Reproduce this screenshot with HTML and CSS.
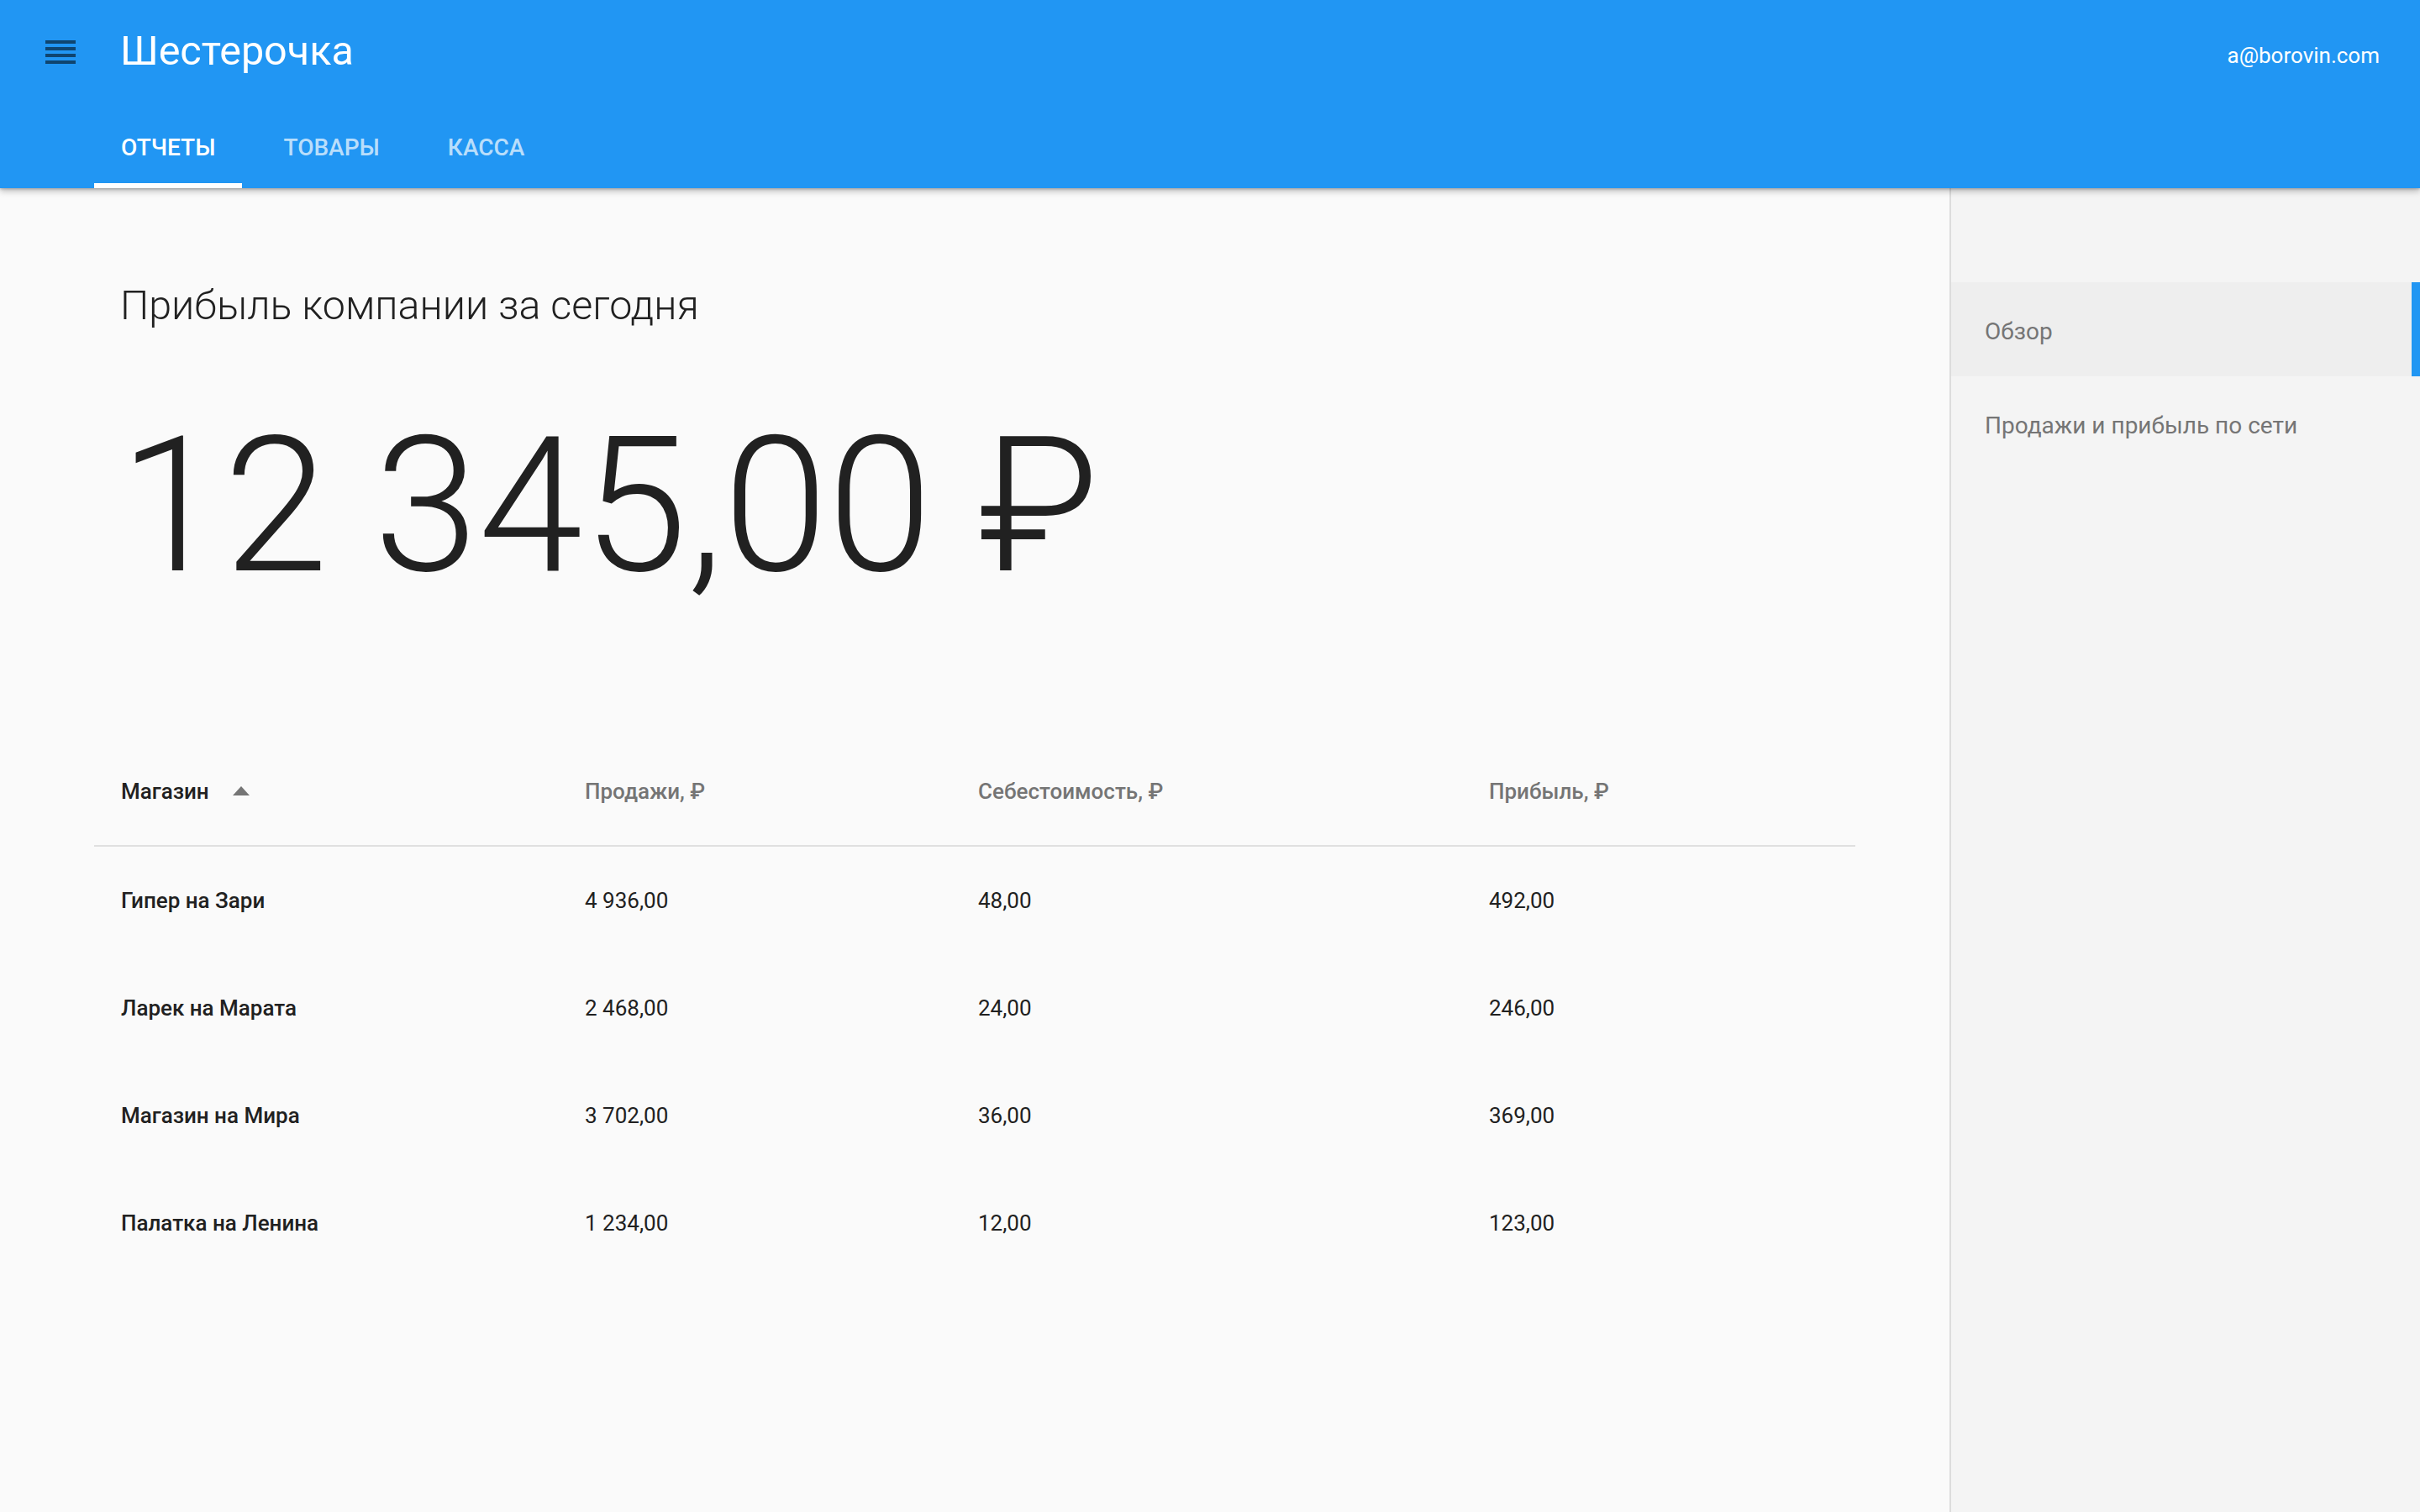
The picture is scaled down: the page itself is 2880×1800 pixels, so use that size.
FILE: index.html
```html
<!DOCTYPE html>
<html lang="ru">
<head>
<meta charset="utf-8">
<title>Шестерочка</title>
<link rel="stylesheet" href="styles.css">
</head>
<body>
<header class="appbar">
  <div class="toolbar">
    <svg class="menu-icon" viewBox="0 0 24 24" width="48" height="48"><path d="M3 15h18v-2H3v2zm0 4h18v-2H3v2zm0-8h18V9H3v2zm0-6v2h18V5H3z"/></svg>
    <div class="app-title">Шестерочка</div>
    <div class="spacer"></div>
    <div class="user">a@borovin.com</div>
  </div>
  <nav class="tabs">
    <div class="tab active">Отчеты</div>
    <div class="tab">Товары</div>
    <div class="tab">Касса</div>
  </nav>
</header>
<div class="layout">
  <main class="content">
    <h1 class="headline">Прибыль компании за сегодня</h1>
    <div class="total">12 345,00 ₽</div>
    <div class="table">
      <div class="row head">
        <div class="cell sorted">Магазин <svg class="sort" viewBox="0 0 20 11" width="20" height="11"><path d="M0 11L10 0l10 11z"/></svg></div>
        <div class="cell">Продажи, ₽</div>
        <div class="cell">Себестоимость, ₽</div>
        <div class="cell">Прибыль, ₽</div>
      </div>
      <div class="row">
        <div class="cell name">Гипер на Зари</div>
        <div class="cell">4 936,00</div>
        <div class="cell">48,00</div>
        <div class="cell">492,00</div>
      </div>
      <div class="row">
        <div class="cell name">Ларек на Марата</div>
        <div class="cell">2 468,00</div>
        <div class="cell">24,00</div>
        <div class="cell">246,00</div>
      </div>
      <div class="row">
        <div class="cell name">Магазин на Мира</div>
        <div class="cell">3 702,00</div>
        <div class="cell">36,00</div>
        <div class="cell">369,00</div>
      </div>
      <div class="row">
        <div class="cell name">Палатка на Ленина</div>
        <div class="cell">1 234,00</div>
        <div class="cell">12,00</div>
        <div class="cell">123,00</div>
      </div>
    </div>
  </main>
  <aside class="sidebar">
    <div class="nav-item active">Обзор</div>
    <div class="nav-item">Продажи и прибыль по сети</div>
  </aside>
</div>
</body>
</html>
```
FILE: styles.css
```css
* { box-sizing: border-box; }
html, body { margin: 0; padding: 0; }
body {
  font-family: Roboto, "Noto Sans", sans-serif;
  color: #212121;
  background: #fafafa;
  min-height: 100vh;
  display: flex;
  flex-direction: column;
}
.appbar {
  background: #2196f3;
  color: #fff;
  height: 224px;
  position: relative;
  z-index: 2;
  box-shadow: 0 3px 8px rgba(0,0,0,0.28), 0 1px 3px rgba(0,0,0,0.2);
}
.toolbar {
  height: 128px;
  display: flex;
  align-items: center;
  padding: 0 48px;
}
.menu-icon {
  fill: rgba(0,0,0,0.54);
  margin-bottom: 4px;
  margin-right: 47px;
  flex: none;
}
.app-title {
  font-size: 48.5px;
  font-weight: 400;
  margin-bottom: 7px;
}
.spacer { flex: 1; }
.user {
  font-size: 26px;
  font-weight: 400;
  margin-top: 3px;
}
.tabs {
  height: 96px;
  display: flex;
  padding-left: 112px;
  gap: 16px;
}
.tab {
  display: flex;
  align-items: center;
  padding: 6px 32px 2px;
  font-size: 28px;
  font-weight: 500;
  text-transform: uppercase;
  color: rgba(255,255,255,0.7);
  border-bottom: 6px solid transparent;
}
.tab + .tab { padding-left: 33px; }
.tab.active {
  color: #fff;
  border-bottom-color: #fff;
}
.layout {
  flex: 1;
  display: flex;
}
.content {
  flex: 1;
  background: #fafafa;
  padding: 108px 112px 0 112px;
}
.headline {
  margin: 0;
  padding-left: 31px;
  font-size: 48.4px;
  line-height: 64px;
  font-weight: 300;
  color: #212121;
}
.total {
  margin-top: 95px;
  padding-left: 30px;
  font-size: 224px;
  line-height: 224px;
  font-weight: 300;
  color: #212121;
}
.table {
  margin-top: 163px;
}
.row {
  display: grid;
  grid-template-columns: 550px 468px 608px 1fr;
  height: 128px;
  align-items: center;
}
.row.head {
  height: 130px;
  border-bottom: 2px solid #e0e0e0;
}
.cell {
  padding-left: 34px;
  font-size: 26px;
  font-weight: 400;
  color: #212121;
}
.cell:first-child { padding-left: 32px; }
.head .cell {
  font-size: 26px;
  font-weight: 500;
  color: #757575;
  display: flex;
  align-items: center;
}
.head .cell.sorted { color: #212121; }
.sort {
  fill: #757575;
  margin-left: 28px;
  margin-bottom: 2px;
}
.cell.name { font-weight: 500; }
.sidebar {
  width: 560px;
  flex: none;
  background: #f4f4f4;
  border-left: 2px solid #dcdcdc;
  padding-top: 112px;
}
.nav-item {
  height: 112px;
  display: flex;
  align-items: center;
  padding: 4px 0 0 40px;
  font-size: 28px;
  color: #757575;
}
.nav-item.active {
  background: #eeeeee;
  border-right: 10px solid #2196f3;
}
```
